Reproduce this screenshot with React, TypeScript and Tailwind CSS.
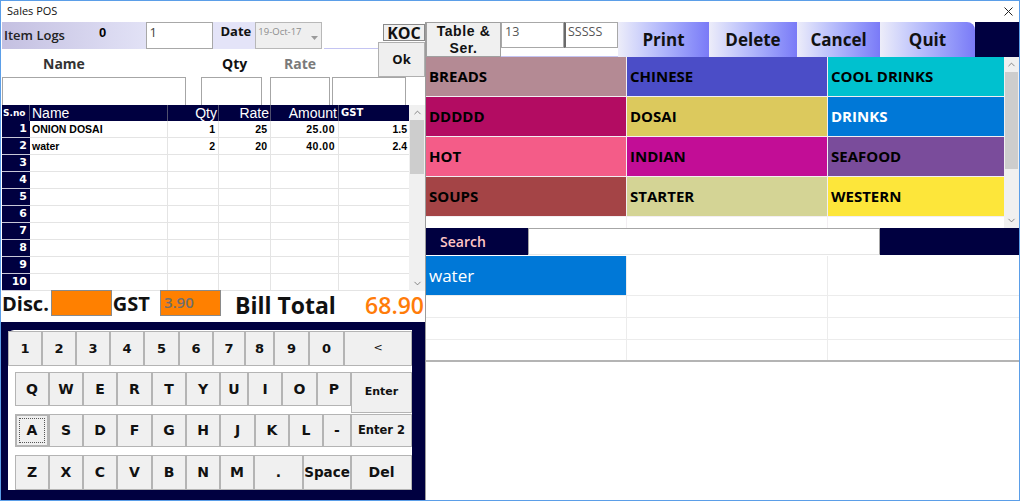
import { ChevronDown, ChevronUp } from "lucide-react";

const gothic = "font-['Open_Sans',sans-serif]";
const tahoma = "font-['DejaVu_Sans',sans-serif]";
const arial = "font-['Liberation_Sans',sans-serif]";
const navy = "bg-[#000040]";

// grid data on the left
const items = [
    { no: 1, name: "ONION DOSAI", qty: "1", rate: "25", amount: "25.00", gst: "1.5" },
    { no: 2, name: "water", qty: "2", rate: "20", amount: "40.00", gst: "2.4" },
    { no: 3 }, { no: 4 }, { no: 5 }, { no: 6 }, { no: 7 }, { no: 8 }, { no: 9 }, { no: 10 },
] as { no: number; name?: string; qty?: string; rate?: string; amount?: string; gst?: string }[];

const categories = [
    { name: "BREADS", color: "bg-[#b48a94]" },
    { name: "CHINESE", color: "bg-[#4b4dc7]" },
    { name: "COOL DRINKS", color: "bg-[#00c1cf]" },
    { name: "DDDDD", color: "bg-[#b30c62]" },
    { name: "DOSAI", color: "bg-[#dcc95d]" },
    { name: "DRINKS", color: "bg-[#0078d7]", text: "text-white" },
    { name: "HOT", color: "bg-[#f45c88]" },
    { name: "INDIAN", color: "bg-[#c20d96]" },
    { name: "SEAFOOD", color: "bg-[#7a4c9b]" },
    { name: "SOUPS", color: "bg-[#a44446]" },
    { name: "STARTER", color: "bg-[#d4d495]" },
    { name: "WESTERN", color: "bg-[#fde63a]" },
];

const numRow = [
    ["1", "w-[34px]"], ["2", "w-[34px]"], ["3", "w-[34px]"], ["4", "w-[34px]"], ["5", "w-[35px]"],
    ["6", "w-[34px]"], ["7", "w-[32px]"], ["8", "w-[29px]"], ["9", "w-[35px]"], ["0", "w-[35px]"],
];
const qRow = [
    ["Q", "w-[34px]"], ["W", "w-[34px]"], ["E", "w-[34px]"], ["R", "w-[35px]"], ["T", "w-[34px]"],
    ["Y", "w-[34px]"], ["U", "w-[28px]"], ["I", "w-[34px]"], ["O", "w-[35px]"], ["P", "w-[34px]"],
];
const aRow = [
    ["S", "w-[34px]"], ["D", "w-[34px]"], ["F", "w-[35px]"], ["G", "w-[34px]"],
    ["H", "w-[34px]"], ["J", "w-[35px]"], ["K", "w-[34px]"], ["L", "w-[34px]"], ["-", "w-[28px]"],
];
const zRow = [
    ["Z", "w-[34px]"], ["X", "w-[34px]"], ["C", "w-[34px]"], ["V", "w-[35px]"], ["B", "w-[34px]"],
    ["N", "w-[34px]"], ["M", "w-[34px]"], [".", "w-[49px]"],
];

const keyCls = `flex items-center justify-center bg-[#f0f0f0] border border-[#b4b4b4] ${tahoma} font-bold text-[#111]`;

function Key({ label, w, size = "text-[13px]" }: { label: string; w: string; size?: string }) {
    return <div className={`${keyCls} ${w} ${size} h-full`}>{label}</div>;
}

function ScrollBar({ w, thumb }: { w: string; thumb: string }) {
    return (
        <div className={`${w} h-full flex flex-col bg-[#f0f0f0]`}>
            <div className="h-[15px] flex items-center justify-center">
                <ChevronUp size={11} strokeWidth={1.6} color="#606060" />
            </div>
            <div className={`${thumb} mx-[1px] bg-[#cdcdcd]`} />
            <div className="flex-1" />
            <div className="h-[15px] flex items-center justify-center">
                <ChevronDown size={11} strokeWidth={1.6} color="#606060" />
            </div>
        </div>
    );
}

function TitleBar() {
    return (
        <div className={`h-[21px] flex items-center justify-between pl-[6px] pr-[5px] text-[11px] text-[#111] ${gothic}`}>
            <span>Sales POS</span>
            <svg width="9" height="9" viewBox="0 0 9 9" className="mr-[1px]">
                <path d="M0.5 0.5L8.5 8.5M8.5 0.5L0.5 8.5" stroke="#222" strokeWidth="1" />
            </svg>
        </div>
    );
}

function LeftTop() {
    const box = "shrink-0 border border-b-0 border-[#a6a6a6] bg-white";
    return (
        <div className="flex flex-col h-[83px]">
            <div className="flex h-[55px]">
                <div className="w-[377px] flex flex-col">
                    {/* item logs / date row */}
                    <div className="h-[27px] flex">
                        <div className={`w-[144px] ml-px flex bg-linear-to-r from-[#c4c0e1] to-[#e2e2f6] ${gothic}`}>
                            <span className="self-end mb-[4px] ml-[2px] text-[13px] font-semibold text-[#222]">Item Logs</span>
                            <span className={`self-start mt-[1px] ml-[34px] text-[13px] font-bold ${arial}`}>0</span>
                        </div>
                        <div className={`w-[68px] border border-[#a8a8a8] bg-white pl-[3px] text-[13px] text-[#444] ${gothic}`}>1</div>
                        <div className={`w-[42px] bg-[#e4e4f8] pl-[7px] text-[13px] font-bold text-[#111] ${gothic}`}>Date</div>
                        <div className="w-[67px] flex border border-[#b8b8b8] bg-[#efefef]">
                            <span className={`flex-1 pl-[2px] pt-[2px] text-[9.5px] text-[#8c8c8c] ${gothic}`}>19-Oct-17</span>
                            <div className="w-[13px] flex items-center justify-center mt-[4px]">
                                <svg width="7" height="4" viewBox="0 0 7 4"><path d="M0 0H7L3.5 4Z" fill="#9a9a9a" /></svg>
                            </div>
                        </div>
                        <div className="w-[54px] ml-[2px] bg-white border-b border-[#c4c4f2]" />
                    </div>
                    {/* labels */}
                    <div className={`h-[28px] flex items-center text-[14px] font-bold ${gothic}`}>
                        <div className="w-[200px] pl-[42px] text-[#333]">Name</div>
                        <div className="w-[69px] pl-[21px] text-[#111]">Qty</div>
                        <div className="pl-[14px] text-[#7a7a7a]">Rate</div>
                    </div>
                </div>
                <div className={`w-[47px] flex flex-col ${gothic}`}>
                    <div className="h-[17px] mt-[2px] ml-[5px] flex items-center justify-center bg-[#f0f0f0] border border-[#8a8a8a] text-[16px] font-bold text-[#111]">
                        KOC
                    </div>
                    <div className="h-[35px] mt-px flex items-center justify-center bg-[#efefef] border border-[#b0b0b0] text-[13px] font-bold text-[#111]">
                        Ok
                    </div>
                </div>
            </div>
            {/* entry inputs */}
            <div className="h-[28px] flex">
                <div className={`${box} w-[184px] ml-px`} />
                <div className={`${box} w-[61px] ml-[15px]`} />
                <div className={`${box} w-[60px] ml-[8px]`} />
                <div className={`${box} w-[74px] ml-[2px]`} />
            </div>
        </div>
    );
}

const cols = "grid grid-cols-[28px_138px_51px_52px_68px_70px]";

function ItemGrid() {
    const cell = "border-r border-b border-[#e4e4e4] leading-[16px] text-[10.5px] font-bold text-black";
    return (
        <div className="flex h-[186px]">
            <div className={`w-[407px] ml-px flex flex-col overflow-hidden ${arial}`}>
                <div className={`${cols} h-[16px] ${navy} text-white leading-[16px]`}>
                    <div className={`pl-px text-[9px] font-bold border-r border-[#50506e] ${tahoma}`}>S.no</div>
                    <div className="pl-[2px] text-[14px] border-r border-[#50506e]">Name</div>
                    <div className="pr-[1px] text-right text-[14px] border-r border-[#50506e]">Qty</div>
                    <div className="pr-[1px] text-right text-[14px] border-r border-[#50506e]">Rate</div>
                    <div className="pr-[1px] text-right text-[14px] border-r border-[#50506e]">Amount</div>
                    <div className={`pl-[2px] text-[10px] font-bold ${tahoma}`}>GST</div>
                </div>
                {items.map((it) => (
                    <div key={it.no} className={`${cols} h-[17px]`}>
                        <div className={`${navy} text-white text-right pr-[3px] text-[11px] font-bold leading-[16px] border-b border-[#c8c8d8] ${tahoma}`}>
                            {it.no}
                        </div>
                        <div className={`${cell} pl-[2px]`}>{it.name}</div>
                        <div className={`${cell} text-right pr-[3px]`}>{it.qty}</div>
                        <div className={`${cell} text-right pr-[3px]`}>{it.rate}</div>
                        <div className={`${cell} text-right pr-[3px] tracking-[0.5px]`}>{it.amount}</div>
                        <div className={`${cell} text-right pr-[2px] border-r-0`}>{it.gst}</div>
                    </div>
                ))}
            </div>
            <ScrollBar w="w-[16px]" thumb="h-[54px]" />
        </div>
    );
}

function TotalsRow() {
    return (
        <div className={`h-[31px] flex items-start ${gothic} font-bold text-[#111]`}>
            <span className="ml-[1px] text-[20px] leading-[26px]">Disc.</span>
            <div className="w-[61px] h-[26px] ml-[2px] -mt-[1px] bg-[#ff8000] border border-[#8a8a8a]" />
            <span className="ml-[1px] text-[20px] leading-[26px]">GST</span>
            <div className="w-[61px] h-[26px] ml-[10px] -mt-[1px] bg-[#ff8000] border border-[#8a8a8a] pl-[3px] text-[15px] font-semibold leading-[22px] text-[#6e6e6e]">
                3.90
            </div>
            <span className="ml-[14px] text-[23px] leading-[28px]">Bill Total</span>
            <span className="ml-auto mr-[1px] text-[23px] leading-[28px] font-semibold text-[#ff7c0a]">68.90</span>
        </div>
    );
}

function Keyboard() {
    return (
        <div className={`flex-1 ${navy} pt-[8px] pl-[7px]`}>
            <div className="w-[404px] h-[160px] bg-white rounded-tl-[6px] flex flex-col">
                <div className="h-[35px] mt-px flex">
                    {numRow.map(([k, w]) => <Key key={k} label={k} w={w} />)}
                    <Key label="<" w="w-[68px]" size="text-[11px] font-normal" />
                </div>
                <div className="mt-[6px] h-[75px] flex pl-[7px]">
                    <div className="w-[336px] flex flex-col">
                        <div className="h-[34px] flex">
                            {qRow.map(([k, w]) => <Key key={k} label={k} w={w} size="text-[14px]" />)}
                        </div>
                        <div className="h-[33px] mt-[8px] flex">
                            <div className={`${keyCls} w-[34px] h-full text-[14px] border-2 border-[#3a3a3a] p-[2px]`}>
                                <div className="w-full h-full flex items-center justify-center border border-dotted border-[#555]">A</div>
                            </div>
                            {aRow.map(([k, w]) => <Key key={k} label={k} w={w} size="text-[14px]" />)}
                        </div>
                    </div>
                    <div className="w-[61px] flex flex-col">
                        <div className={`${keyCls} h-[41px] text-[11px]`}>Enter</div>
                        <div className={`${keyCls} h-[33px] mt-px text-[11.5px]`}>Enter 2</div>
                    </div>
                </div>
                <div className="mt-[8px] h-[35px] flex pl-[7px]">
                    {zRow.map(([k, w]) => <Key key={k} label={k} w={w} size="text-[14px]" />)}
                    <Key label="Space" w="w-[48px]" size="text-[13.5px]" />
                    <Key label="Del" w="w-[61px]" size="text-[14px]" />
                </div>
            </div>
        </div>
    );
}

function LeftPanel() {
    return (
        <div className="w-[424px] flex flex-col">
            <LeftTop />
            <ItemGrid />
            <TotalsRow />
            <Keyboard />
        </div>
    );
}

function ActionBar() {
    const btn = `h-full flex items-center justify-center bg-linear-to-r from-[#ededf9] to-[#7a7af7] text-[17px] font-bold text-[#111] ${gothic}`;
    return (
        <div className="h-[35px] flex">
            <div className={`w-[75px] flex flex-col items-center justify-center bg-[#f0f0f0] border border-[#a0a0a0] text-[14px] leading-[16.5px] tracking-[0.6px] font-bold text-[#111] ${arial}`}>
                <span>Table &amp;</span>
                <span>Ser.</span>
            </div>
            <div className="w-[117px] flex flex-col">
                <div className={`h-[26px] flex text-[12.5px] text-[#555] ${gothic}`}>
                    <div className="w-[63px] border border-[#a8a8a8] bg-white pl-[3px]">13</div>
                    <div className="w-[54px] border border-l-2 border-[#a8a8a8] border-l-[#6a6a6a] bg-white pl-[2px]">SSSSS</div>
                </div>
                <div className="flex-1 bg-white border-b border-[#c4c4f2]" />
            </div>
            <div className={`${btn} w-[91px]`}>Print</div>
            <div className={`${btn} w-[88px]`}>Delete</div>
            <div className={`${btn} w-[83px]`}>Cancel</div>
            <div className={`${btn} w-[95px] rounded-tr-[8px]`}>Quit</div>
            <div className={`flex-1 ${navy}`} />
        </div>
    );
}

function CategoryGrid() {
    return (
        <div className="h-[171px] flex">
            <div className="flex-1 overflow-hidden">
                <div className="grid grid-cols-[200px_200px_1fr] auto-rows-[39px] gap-px bg-[#f2eef2]">
                    {categories.map((c) => (
                        <div key={c.name} className={`${c.color} ${c.text ?? "text-black"} flex items-center pl-[3px] text-[15px] font-bold ${gothic}`}>
                            {c.name}
                        </div>
                    ))}
                    <div className="bg-white" />
                    <div className="bg-white" />
                    <div className="bg-white" />
                </div>
            </div>
            <ScrollBar w="w-[15px]" thumb="h-[97px]" />
        </div>
    );
}

function SearchBar() {
    return (
        <div className="h-[27px] flex">
            <div className={`w-[102px] ${navy} flex items-center pl-[14px] text-[14px] font-semibold text-[#ffc6c6] ${gothic}`}>Search</div>
            <div className="w-[352px] bg-white border border-[#a6a6a6] border-b-[#e6e6e6]" />
            <div className={`flex-1 ${navy}`} />
        </div>
    );
}

function Results() {
    const empty = <div className="bg-white" />;
    return (
        <div className="mt-px grid grid-cols-[200px_200px_1fr] grid-rows-[39px_21px_21px_20px] gap-px bg-[#ececec]">
            <div className={`bg-[#0078d7] text-white text-[17px] flex items-center pl-[3px] ${gothic}`}>water</div>
            {empty}{empty}
            {empty}{empty}{empty}
            {empty}{empty}{empty}
            {empty}{empty}{empty}
        </div>
    );
}

function RightPanel() {
    return (
        <div className="flex-1 flex flex-col border-l border-[#9c9c9c] bg-white">
            <ActionBar />
            <CategoryGrid />
            <SearchBar />
            <Results />
            <div className="h-[2px] bg-[#b4b4b4]" />
            <div className="flex-1" />
        </div>
    );
}

export default function App() {
    return (
        <div className="w-[1020px] h-[501px] bg-white border border-[#5b9ee8] flex flex-col overflow-hidden">
            <TitleBar />
            <div className="flex flex-1 min-h-0">
                <LeftPanel />
                <RightPanel />
            </div>
        </div>
    );
}
